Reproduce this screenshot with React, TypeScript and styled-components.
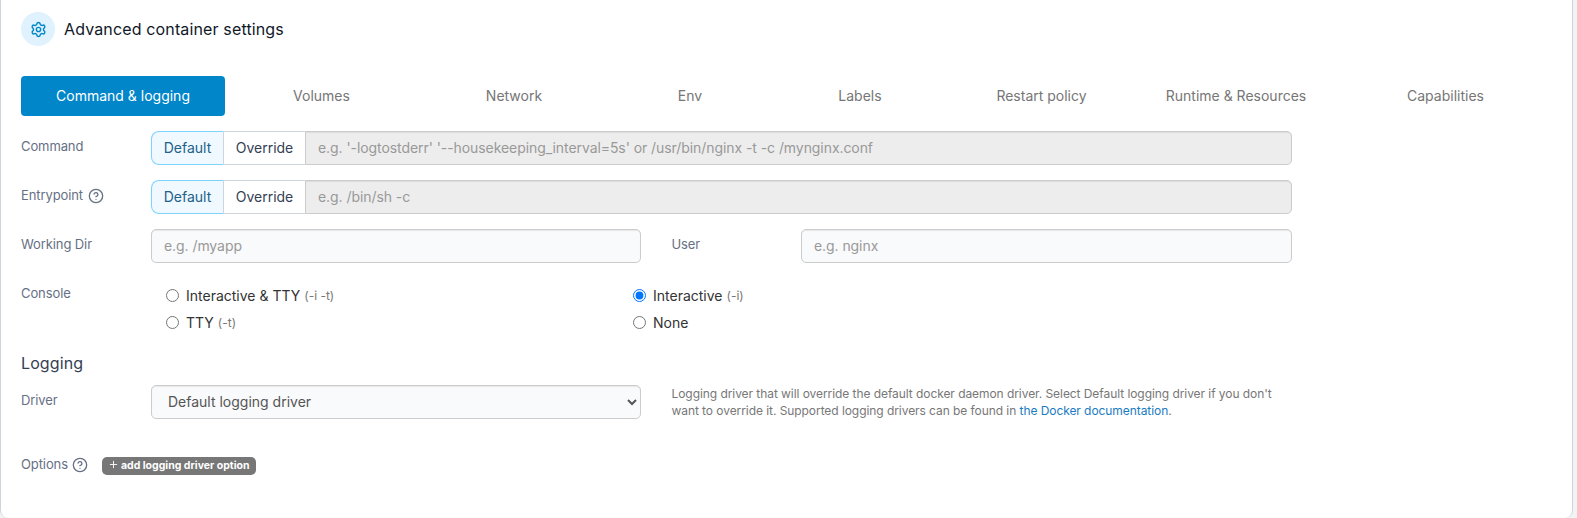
import React from 'react';
import styled, { createGlobalStyle, css } from 'styled-components';
import { Settings, HelpCircle, Plus } from 'lucide-react';

const GlobalStyle = createGlobalStyle`
  *, *::before, *::after { box-sizing: border-box; }
  html { background: #f2f3f5; }
  body {
    margin: 0;
    background: #f2f3f5;
    color: #333;
    font-family: Inter, 'Liberation Sans', sans-serif;
    font-size: 14px;
    line-height: 20px;
    overflow: hidden;
  }
`;

const Widget = styled.section`
  width: 1573px;
  height: 518px;
  padding: 12px 20px 0;
  background: #fff;
  border: 1px solid #d0d5dd;
  border-top: 0;
  border-bottom: 0;
  border-radius: 0 0 8px 8px;
`;

const WidgetHeader = styled.header`
  display: flex;
  align-items: center;
  gap: 9px;
  height: 34px;
`;

const IconBadge = styled.span`
  display: flex;
  align-items: center;
  justify-content: center;
  width: 34px;
  height: 34px;
  border-radius: 50%;
  background: #e0f2fe;
  color: #0086c9;
`;

const WidgetTitle = styled.h1`
  margin: 0;
  color: #101828;
  font-size: 16px;
  font-weight: 400;
  letter-spacing: 0.14px;
`;

const Tabs = styled.nav`
  display: grid;
  grid-template-columns: 204px 193px 192px 160px 180px 183px 206px 213px;
  margin-top: 30px;
`;

const Tab = styled.a<{ $active?: boolean }>`
  height: 40px;
  border-radius: 4px;
  line-height: 40px;
  text-align: center;
  white-space: nowrap;
  color: #767676;
  ${({ $active }) => $active && css`
    background: #0086c9;
    color: #fff;
  `}
`;

const FormRow = styled.div`
  display: flex;
  width: 1271px;
  height: 34px;
  margin-top: 15px;
`;

const Label = styled.label<{ $width?: number }>`
  display: flex;
  gap: 5px;
  flex: none;
  width: ${({ $width }) => ($width ? `${$width}px` : 'auto')};
  padding-top: 5px;
  color: #667085;
  font-size: 13px;
  letter-spacing: -0.1px;
`;

const HelpIcon = styled(HelpCircle)`
  margin-top: 3px;
`;

const Input = styled.input<{ $joined?: boolean; $width?: number }>`
  flex: ${({ $width }) => ($width ? `0 0 ${$width}px` : '1')};
  min-width: 0;
  height: 34px;
  padding: 5px 12px 7px;
  border: 1px solid #ccc;
  border-radius: ${({ $joined }) => ($joined ? '0 5px 5px 0' : '5px')};
  background: #f9fafb;
  box-shadow: inset 0 1px 1px rgba(0, 0, 0, 0.075);
  color: #555;
  font: inherit;
  letter-spacing: -0.07px;
  &::placeholder { color: #999; opacity: 1; }
  &:disabled { background: #ededed; }
`;

const ToggleButton = styled.button<{ $selected?: boolean }>`
  flex: none;
  width: ${({ $selected }) => ($selected ? '73px' : '81px')};
  height: 34px;
  padding: 0;
  border: 1px solid #d0d5dd;
  border-width: 1px 0;
  background: #fff;
  color: #344054;
  font: inherit;
  ${({ $selected }) => $selected && css`
    border-color: #7cd4fd;
    border-right-color: #d0d5dd;
    border-width: 1px;
    border-radius: 8px 0 0 8px;
    background: #f0f9ff;
    color: #22618a;
  `}
`;

const UserLabel = styled(Label)`
  margin-left: 30.5px;
`;

const ConsoleRow = styled(FormRow)`
  height: 54px;
`;

const RadioGrid = styled.div`
  display: grid;
  grid-template-columns: 467px 1fr;
  grid-auto-rows: 27px;
  flex: 1;
  padding: 4px 0 0 15px;
`;

const RadioOption = styled.label`
  display: flex;
  align-items: center;
  height: 27px;
`;

const Radio = styled.input`
  width: 13px;
  height: 13px;
  margin: 0 7px 0 0;
`;

const Hint = styled.span`
  margin-left: 4px;
  color: #777;
  font-size: 12px;
`;

const SectionTitle = styled.h2`
  margin: 21px 0 0;
  color: #344054;
  font-size: 16px;
  font-weight: 400;
  line-height: 20px;
  letter-spacing: 0.1px;
`;

const DriverRow = styled(FormRow)`
  margin-top: 12px;
`;

const Select = styled.select`
  width: 490px;
  height: 34px;
  padding: 5px 12px 7px;
  border: 1px solid #ccc;
  border-radius: 5px;
  background: #f9fafb;
  box-shadow: inset 0 1px 1px rgba(0, 0, 0, 0.075);
  color: #555;
  font: inherit;
`;

const HelpText = styled.p`
  flex: 1;
  margin: 0 0 0 30.5px;
  color: #777;
  font-size: 12px;
  line-height: 17px;
  letter-spacing: -0.065px;
`;

const DocLink = styled.a`
  color: #1a7bbf;
`;

const OptionsRow = styled(FormRow)`
  margin-top: 30px;
  gap: 14px;
`;

const OptionsLabel = styled(Label)`
  gap: 4px;
`;

const AddOption = styled.button`
  display: flex;
  align-items: center;
  gap: 2px;
  width: 154px;
  height: 18px;
  margin-top: 8px;
  padding: 0 6px;
  border: 0;
  border-radius: 5px;
  background: #777;
  color: #fff;
  font: 700 10.5px/18px Inter, 'Liberation Sans', sans-serif;
  white-space: nowrap;
`;

const PlusIcon = styled(Plus)`
  flex: none;
  margin-bottom: 4px;
`;

const TABS = ['Command & logging', 'Volumes', 'Network', 'Env', 'Labels', 'Restart policy', 'Runtime & Resources', 'Capabilities'];

const CONSOLE_OPTIONS = [
  { label: 'Interactive & TTY', hint: '(-i -t)' },
  { label: 'Interactive', hint: '(-i)', checked: true },
  { label: 'TTY', hint: '(-t)' },
  { label: 'None' },
];

function OverrideField({ placeholder }: { placeholder: string }) {
  return (
    <>
      <ToggleButton $selected>Default</ToggleButton>
      <ToggleButton>Override</ToggleButton>
      <Input $joined disabled placeholder={placeholder} />
    </>
  );
}

export default function App() {
  return (
    <>
      <GlobalStyle />
      <Widget>
        <WidgetHeader>
          <IconBadge><Settings size={17} strokeWidth={2} /></IconBadge>
          <WidgetTitle>Advanced container settings</WidgetTitle>
        </WidgetHeader>
        <Tabs>
          {TABS.map((tab, i) => <Tab key={tab} $active={i === 0}>{tab}</Tab>)}
        </Tabs>
        <FormRow>
          <Label $width={130}>Command</Label>
          <OverrideField placeholder="e.g. '-logtostderr' '--housekeeping_interval=5s' or /usr/bin/nginx -t -c /mynginx.conf" />
        </FormRow>
        <FormRow>
          <Label $width={130}>Entrypoint <HelpIcon size={16} /></Label>
          <OverrideField placeholder="e.g. /bin/sh -c" />
        </FormRow>
        <FormRow>
          <Label $width={130}>Working Dir</Label>
          <Input $width={490} placeholder="e.g. /myapp" />
          <UserLabel $width={129.5}>User</UserLabel>
          <Input placeholder="e.g. nginx" />
        </FormRow>
        <ConsoleRow>
          <Label $width={130}>Console</Label>
          <RadioGrid>
            {CONSOLE_OPTIONS.map(({ label, hint, checked }) => (
              <RadioOption key={label}>
                <Radio type="radio" name="console" defaultChecked={checked} />
                {label}
                {hint && <Hint>{hint}</Hint>}
              </RadioOption>
            ))}
          </RadioGrid>
        </ConsoleRow>
        <SectionTitle>Logging</SectionTitle>
        <DriverRow>
          <Label $width={130}>Driver</Label>
          <Select defaultValue="default">
            <option value="default">Default logging driver</option>
          </Select>
          <HelpText>
            Logging driver that will override the default docker daemon driver. Select Default logging driver if you don't
            want to override it. Supported logging drivers can be found in <DocLink>the Docker documentation</DocLink>.
          </HelpText>
        </DriverRow>
        <OptionsRow>
          <OptionsLabel>Options <HelpIcon size={16} /></OptionsLabel>
          <AddOption><PlusIcon size={11} />add logging driver option</AddOption>
        </OptionsRow>
      </Widget>
    </>
  );
}
